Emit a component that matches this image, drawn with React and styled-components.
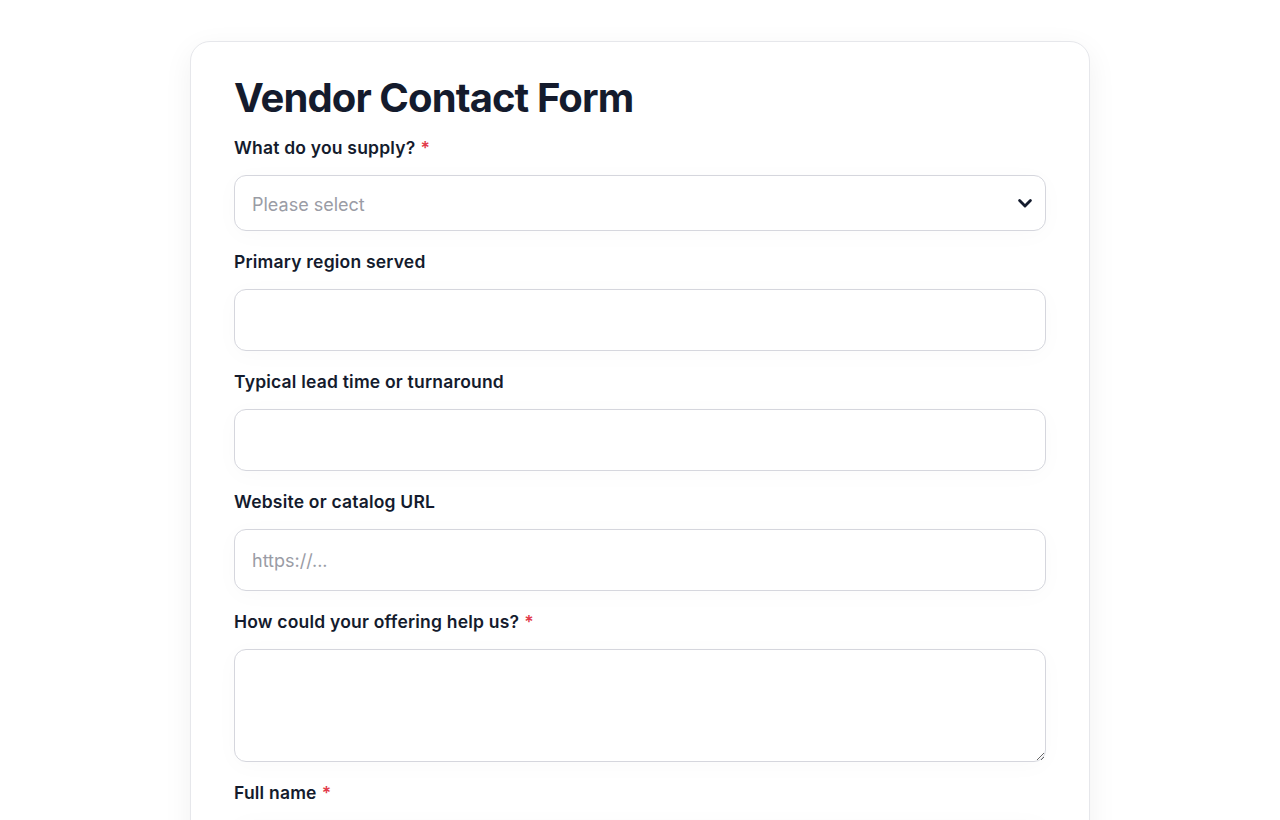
import React from "react";
import styled, { createGlobalStyle } from "styled-components";

const GlobalStyle = createGlobalStyle`
  html, body {
    margin: 0;
    padding: 0;
    background: #ffffff;
  }
  body {
    font-family: Inter, "Noto Sans", "Liberation Sans", sans-serif;
    color: #141b2d;
  }
  * {
    box-sizing: border-box;
  }
`;

const Card = styled.div`
  width: 900px;
  margin: 41px auto 0;
  padding: 32px 43px 40px;
  background: #ffffff;
  border: 1px solid #e6e7eb;
  border-radius: 20px;
  box-shadow: 0 8px 30px rgba(17, 24, 39, 0.06);
`;

const Title = styled.h1`
  margin: 0 0 15px;
  font-size: 40px;
  line-height: 48px;
  font-weight: 700;
  letter-spacing: -0.9px;
  color: #141b2d;
`;

const Field = styled.div`
  display: flex;
  flex-direction: column;
  margin-bottom: 20px;
`;

const Label = styled.label`
  font-size: 17.5px;
  line-height: 22px;
  font-weight: 600;
  letter-spacing: 0.2px;
  color: #141b2d;
  margin-bottom: 16px;
`;

const Required = styled.span`
  color: #e23b4a;
  margin-left: 5px;
`;

const SelectWrap = styled.div`
  position: relative;
`;

const Select = styled.select`
  appearance: none;
  width: 100%;
  height: 56px;
  padding: 3px 48px 0 17px;
  font-family: inherit;
  font-size: 18px;
  color: #9a9ca5;
  background: #ffffff;
  border: 1px solid #d5d6dd;
  border-radius: 12px;
  box-shadow: 0 4px 24px rgba(17, 24, 39, 0.025);
  outline: none;
`;

const Chevron = styled.svg`
  position: absolute;
  right: 11px;
  top: 50%;
  transform: translateY(-50%);
  pointer-events: none;
`;

const Input = styled.input`
  width: 100%;
  height: 62px;
  padding: 0 17px;
  font-family: inherit;
  font-size: 18px;
  color: #141b2d;
  background: #ffffff;
  border: 1px solid #d5d6dd;
  border-radius: 12px;
  box-shadow: 0 4px 24px rgba(17, 24, 39, 0.025);
  outline: none;

  &::placeholder {
    color: #9a9ca5;
  }
`;

const TextArea = styled.textarea`
  width: 100%;
  height: 113px;
  padding: 14px 17px;
  font-family: inherit;
  font-size: 18px;
  color: #141b2d;
  background: #ffffff;
  border: 1px solid #d5d6dd;
  border-radius: 12px;
  box-shadow: 0 4px 24px rgba(17, 24, 39, 0.025);
  outline: none;
  resize: vertical;
  display: block;
`;

export default function App() {
  return (
    <>
      <GlobalStyle />
      <Card>
        <Title>Vendor Contact Form</Title>

        <Field>
          <Label>
            What do you supply?<Required>*</Required>
          </Label>
          <SelectWrap>
            <Select defaultValue="">
              <option value="" disabled>
                Please select
              </option>
              <option>Raw materials</option>
              <option>Packaging</option>
              <option>Services</option>
            </Select>
            <Chevron width="20" height="20" viewBox="0 0 24 24" fill="none">
              <polyline
                points="5.5,9 12,15.5 18.5,9"
                stroke="#141b2d"
                strokeWidth="3.4"
                strokeLinecap="round"
                strokeLinejoin="round"
              />
            </Chevron>
          </SelectWrap>
        </Field>

        <Field>
          <Label>Primary region served</Label>
          <Input type="text" />
        </Field>

        <Field>
          <Label>Typical lead time or turnaround</Label>
          <Input type="text" />
        </Field>

        <Field>
          <Label>Website or catalog URL</Label>
          <Input type="url" placeholder="https://..." />
        </Field>

        <Field>
          <Label>
            How could your offering help us?<Required>*</Required>
          </Label>
          <TextArea />
        </Field>

        <Field>
          <Label>
            Full name<Required>*</Required>
          </Label>
          <Input type="text" />
        </Field>
      </Card>
    </>
  );
}
